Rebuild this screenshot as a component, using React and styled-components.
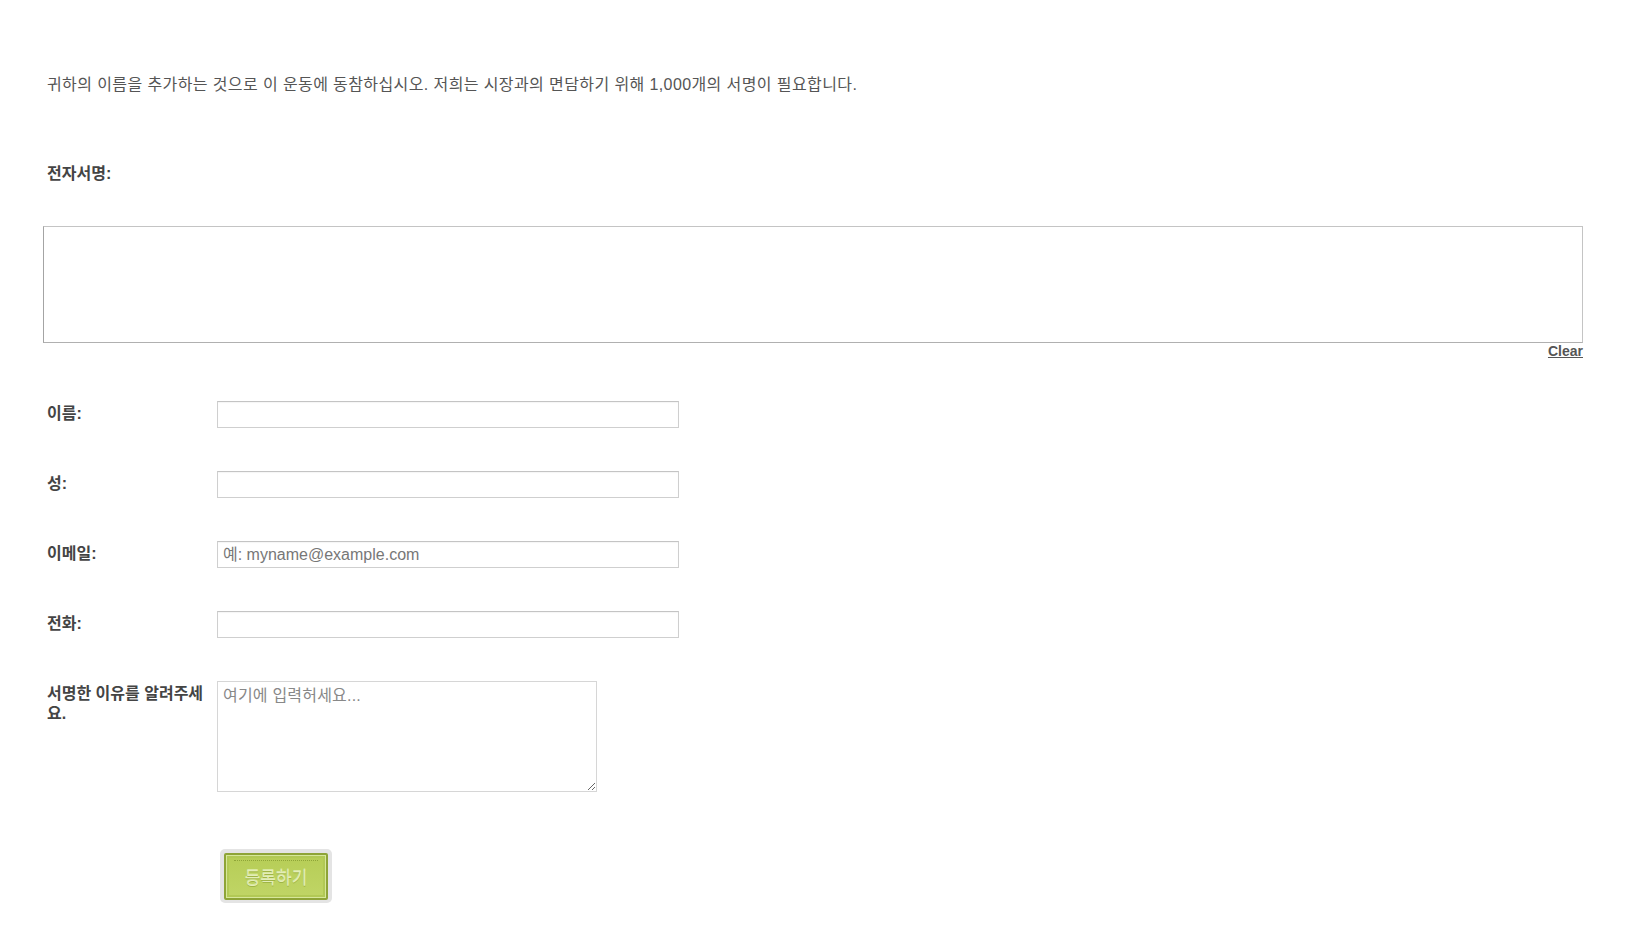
import React from "react";
import styled, { createGlobalStyle } from "styled-components";

const GlobalStyle = createGlobalStyle`
  html, body {
    margin: 0;
    padding: 0;
    background: #ffffff;
  }
  body {
    font-family: "Liberation Sans", "Noto Sans CJK KR", sans-serif;
    color: #555;
  }
`;

const Page = styled.div`
  padding: 74px 45px 40px 43px;
`;

const Intro = styled.p`
  margin: 0;
  padding-left: 4px;
  font-size: 16px;
  letter-spacing: 0.4px;
  line-height: 22px;
  color: #555;
`;

const Label = styled.label`
  display: block;
  box-sizing: border-box;
  width: ${(p) => (p.$wide ? "auto" : "174px")};
  flex: none;
  padding: 3px 0 0 4px;
  font-size: 16px;
  line-height: 20px;
  font-weight: bold;
  color: #444;
`;

const SigLabel = styled(Label)`
  margin-top: 68px;
  padding-top: 0;
`;

const SigPad = styled.div`
  margin-top: 42px;
  height: 117px;
  box-sizing: border-box;
  border: 1px solid #c4c4c4;
  border-left-color: #a4a4a4;
  border-bottom-color: #b0b0b0;
  background: #fff;
`;

const ClearRow = styled.div`
  text-align: right;
  line-height: 16px;
`;

const ClearLink = styled.a`
  font-size: 14px;
  font-weight: bold;
  color: #555;
  text-decoration: underline;
  cursor: pointer;
`;

const Fields = styled.div`
  margin-top: 42px;
  display: flex;
  flex-direction: column;
  gap: 43px;
`;

const Row = styled.div`
  display: flex;
  align-items: flex-start;
`;

const Input = styled.input`
  box-sizing: border-box;
  width: 462px;
  height: 27px;
  margin: 0;
  padding: 0 5px;
  border: 1px solid #cfcfcf;
  border-top-color: #c4c4c4;
  box-shadow: inset 0 1px 1px rgba(0, 0, 0, 0.04);
  font-family: "Liberation Sans", "Noto Sans CJK KR", sans-serif;
  font-size: 16px;
  color: #333;
  outline: none;
  &::placeholder {
    color: #777;
  }
`;

const TextArea = styled.textarea`
  box-sizing: border-box;
  width: 380px;
  height: 111px;
  margin: 0;
  padding: 3px 5px;
  border: 1px solid #d6d6d6;
  font-family: "Liberation Sans", "Noto Sans CJK KR", sans-serif;
  font-size: 16px;
  letter-spacing: 0.2px;
  line-height: 21px;
  color: #333;
  outline: none;
  &::placeholder {
    color: #888;
  }
`;

const ButtonRow = styled(Row)`
  margin-top: 57px;
`;

const ButtonFrame = styled.div`
  margin-left: 3px;
  padding: 4px 4px 3px;
  background: #e4e4e4;
  border-radius: 5px;
`;

const SubmitButton = styled.button`
  display: block;
  box-sizing: border-box;
  width: 104px;
  height: 47px;
  padding: 0;
  border: 2px solid #8ea437;
  border-radius: 2px;
  background: linear-gradient(#b6cd56, #c0d566);
  box-shadow: inset 0 0 0 1px #d6e79a, inset 0 0 0 3px #b2c955;
  font-family: "Noto Sans CJK KR", sans-serif;
  font-size: 17px;
  color: #e3edb8;
  text-shadow: 0 1px 0 #9fb545, 0 -1px 0 #d8e8a0;
  position: relative;
  cursor: pointer;
  &::before {
    content: "";
    position: absolute;
    left: 8px;
    right: 8px;
    top: 5px;
    border-top: 1px dotted #8fa538;
  }
`;

export default function App() {
  return (
    <>
      <GlobalStyle />
      <Page>
        <Intro>
          귀하의 이름을 추가하는 것으로 이 운동에 동참하십시오. 저희는 시장과의 면담하기 위해 1,000개의 서명이 필요합니다.
        </Intro>
        <SigLabel $wide>전자서명:</SigLabel>
        <SigPad />
        <ClearRow>
          <ClearLink>Clear</ClearLink>
        </ClearRow>
        <Fields>
          <Row>
            <Label>이름:</Label>
            <Input type="text" />
          </Row>
          <Row>
            <Label>성:</Label>
            <Input type="text" />
          </Row>
          <Row>
            <Label>이메일:</Label>
            <Input type="email" placeholder="예: myname@example.com" />
          </Row>
          <Row>
            <Label>전화:</Label>
            <Input type="tel" />
          </Row>
          <Row>
            <Label>서명한 이유를 알려주세요.</Label>
            <TextArea placeholder="여기에 입력허세요..." />
          </Row>
        </Fields>
        <ButtonRow>
          <Label />
          <ButtonFrame>
            <SubmitButton type="button">등록하기</SubmitButton>
          </ButtonFrame>
        </ButtonRow>
      </Page>
    </>
  );
}
